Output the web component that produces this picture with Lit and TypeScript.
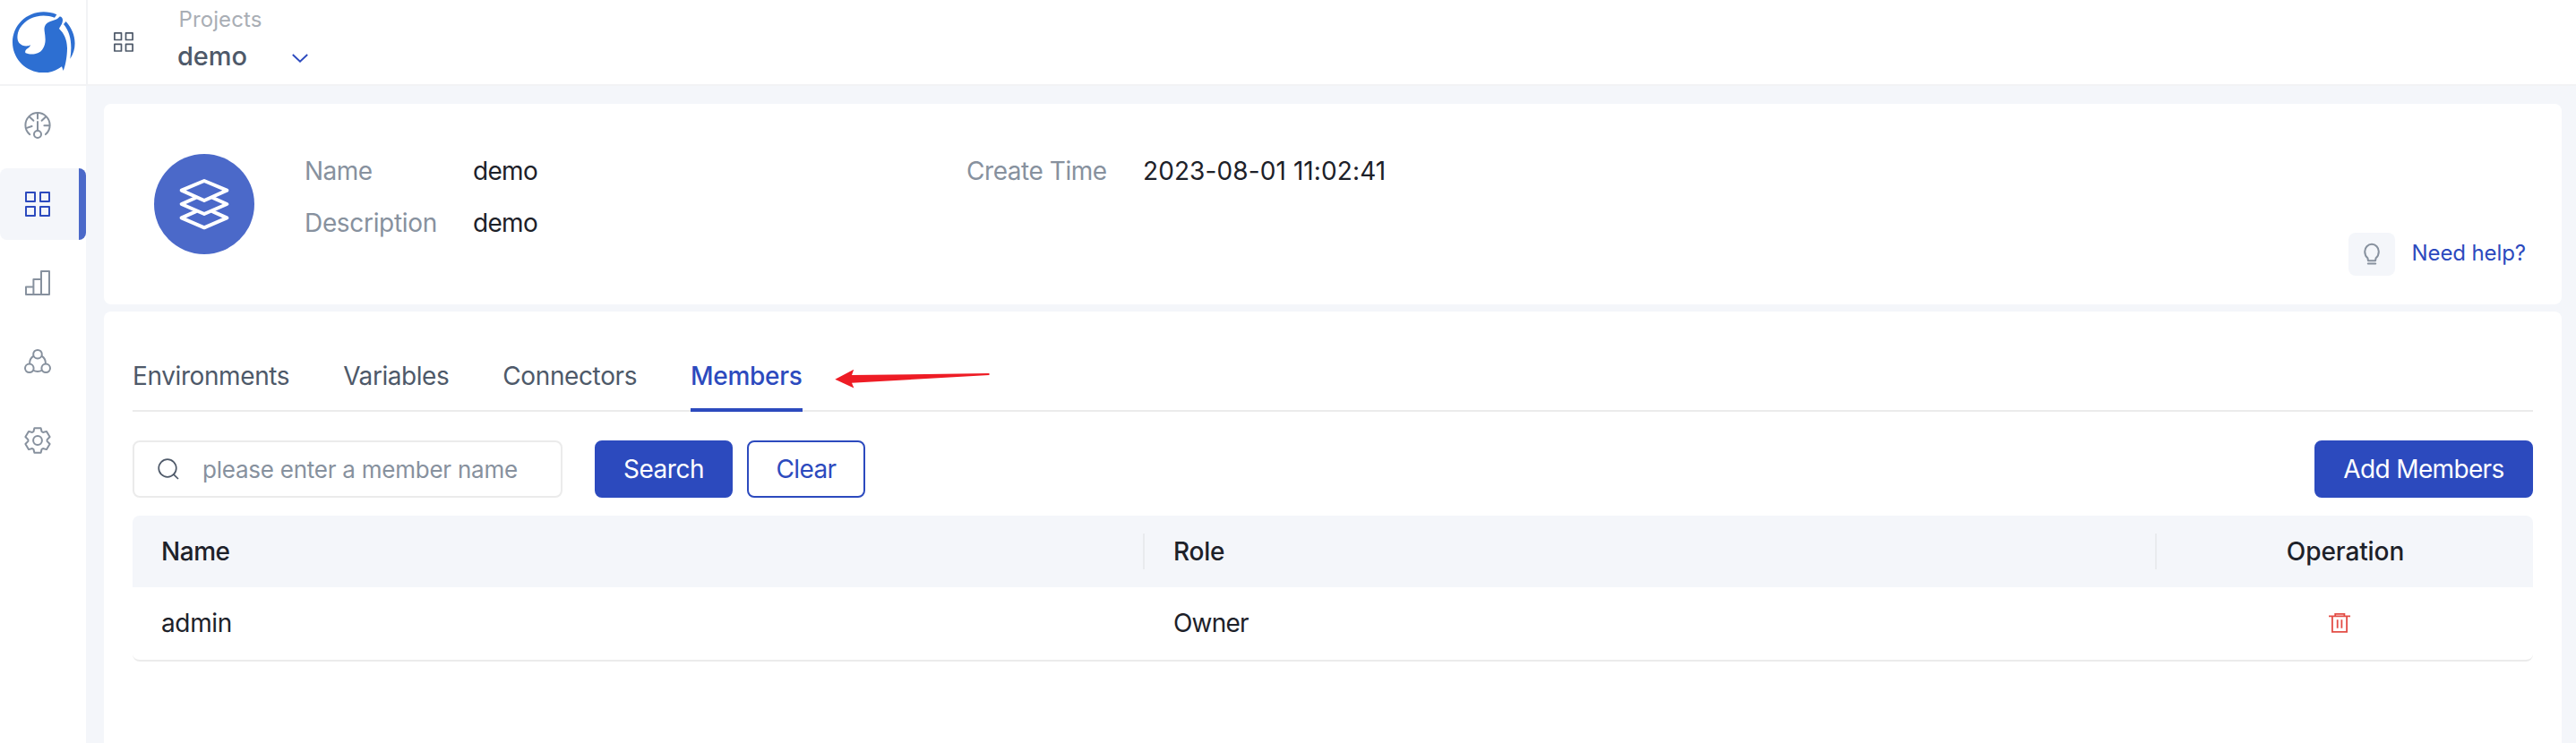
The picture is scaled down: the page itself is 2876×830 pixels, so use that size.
import { LitElement, html, css } from "lit";
import { customElement, property } from "lit/decorators.js";
import { classMap } from "lit/directives/class-map.js";

const gridIcon = html`<svg class="i28" viewBox="0 0 28 28" fill="none" stroke="currentColor" stroke-width="2" stroke-linejoin="round">
  <rect x="1" y="1" width="10" height="10" /><rect x="17" y="1" width="10" height="10" />
  <rect x="1" y="17" width="10" height="10" /><rect x="17" y="17" width="10" height="10" />
</svg>`;

const gaugeIcon = html`<svg class="i32" viewBox="0 0 32 32" fill="none" stroke="currentColor" stroke-width="2" stroke-linecap="round">
  <path d="M7.3 26.2A13.6 13.6 0 0 1 2.4 15.7 13.6 13.6 0 0 1 16 2.1 13.6 13.6 0 0 1 29.6 15.7 13.6 13.6 0 0 1 24.9 26.1" />
  <path d="M16 2.4V8.6M6.6 6.2L11.4 10.8M25.4 6.2L20.6 10.8M4 18.9L9.6 17M29.2 16.2H23.4" />
  <path d="M16 12V21.6" />
  <circle cx="16" cy="26" r="4" />
</svg>`;

const barsIcon = html`<svg class="i28" viewBox="0 0 28 28" fill="none" stroke="currentColor" stroke-width="2" stroke-linejoin="round">
  <path d="M1 18.4H9.4V27H1ZM9.4 10H18V27H9.4ZM18 1H27V27H18Z" />
</svg>`;

const clusterIcon = html`<svg class="i32" viewBox="0 0 32 32" fill="none" stroke="currentColor" stroke-width="2">
  <circle cx="16" cy="7.7" r="4.8" /><circle cx="6.8" cy="23.3" r="4.8" /><circle cx="25.2" cy="23.3" r="4.8" />
  <path d="M11.6 9.6C8.4 11.6 6.9 14.6 7.1 18.4M20.4 9.6C23.6 11.6 25.1 14.6 24.9 18.4M10.9 25.6C14 27.2 18 27.2 21.1 25.6" />
</svg>`;

const gearIcon = html`<svg class="i32" viewBox="0 0 32 32" fill="none" stroke="currentColor" stroke-width="2" stroke-linejoin="round">
  <path d="M12.4 2.2H19.6L20.6 6.2L22 7L26 5.9L29.6 12L26.6 15.1V16.9L29.6 20L26 26.1L22 25L20.6 25.8L19.6 29.8H12.4L11.4 25.8L10 25L6 26.1L2.4 20L5.4 16.9V15.1L2.4 12L6 5.9L10 7L11.4 6.2Z" />
  <circle cx="16" cy="16" r="4.9" />
</svg>`;

const logo = html`<svg class="logo" viewBox="42 38 210 205" fill="#2d6fd2">
  <path d="M190 48C176 41 160 39 146 39C88 39 42 85 42 141C42 197 88 243 146 243C170 243 190 235 207 222L212 236C218 222 225 190 225 160C224 130 215 112 198 95C203 85 210 78 210 65C209 58 204 53 199 55C192 65 180 66 168 71C152 77 147 88 149 103C152 125 156 145 142 165C130 182 104 184 86 177C82 172 86 165 93 161C99 157 102 152 102 150C92 156 75 155 64 143C55 132 57 110 67 93C90 55 140 42 183 58Z" />
  <path d="M221 71C252 105 262 155 235 196C242 150 238 110 213 80Z" />
</svg>`;

@customElement("side-nav")
export class SideNav extends LitElement {
  @property({ type: Number }) active = 1;
  static styles = css`
    :host { display: flex; flex-direction: column; gap: 8px; box-sizing: border-box; width: 96px; padding-top: 4px; background: #fff; color: #87919e; }
    .item { display: flex; height: 80px; box-sizing: border-box; align-items: center; justify-content: center; padding-right: 12px; border-radius: 8px; }
    .item.active { color: #2c4abe; background: linear-gradient(#4b69c9, #4b69c9) right / 8px 100% no-repeat #f4f6fa; }
    svg { display: block; }
    .i28 { width: 28px; height: 28px; }
    .i32 { width: 32px; height: 32px; }
  `;
  render() {
    return [gaugeIcon, gridIcon, barsIcon, clusterIcon, gearIcon].map(
      (icon, i) => html`<div class=${classMap({ item: true, active: i === this.active })}>${icon}</div>`
    );
  }
}

@customElement("top-bar")
export class TopBar extends LitElement {
  static styles = css`
    :host { display: flex; box-sizing: border-box; height: 96px; background: #fff; border-bottom: 2px solid #f2f3f5; }
    svg { display: block; }
    .brand { width: 82px; padding: 12.6px 0 0 14px; border-right: 2px solid #f2f3f5; }
    .logo { width: 70px; height: 68.4px; }
    .switch { color: #4e5969; padding: 36px 0 0 29px; }
    .switch svg { width: 22px; height: 22px; }
    .project { padding: 4px 0 0 49px; }
    .label { height: 36px; line-height: 36px; font-size: 24px; letter-spacing: 0.1px; color: #a9aeb5; padding-left: 1.5px; }
    .current { display: flex; align-items: center; height: 44px; line-height: 44px; font-size: 29px; font-weight: 500; letter-spacing: -0.1px; color: #4e5969; margin-top: 0.5px; }
    .current svg { width: 18px; height: 10px; margin: 4px 0 0 50px; }
  `;
  render() {
    return html`
      <div class="brand">${logo}</div>
      <div class="switch">
        <svg viewBox="0 0 22 22" fill="none" stroke="currentColor" stroke-width="1.7" stroke-linejoin="round">
          <rect x="0.9" y="0.9" width="7.6" height="7.6" /><rect x="13.5" y="0.9" width="7.6" height="7.6" />
          <rect x="0.9" y="13.4" width="7.6" height="7.6" /><rect x="13.5" y="13.4" width="7.6" height="7.6" />
        </svg>
      </div>
      <div class="project">
        <div class="label">Projects</div>
        <div class="current">demo
          <svg viewBox="0 0 18 10" fill="none" stroke="#2c4abe" stroke-width="1.9"><path d="M0.8 1L9 8.6L17.2 1" /></svg>
        </div>
      </div>`;
  }
}

@customElement("project-summary")
export class ProjectSummary extends LitElement {
  static styles = css`
    :host { display: flex; box-sizing: border-box; height: 224px; padding: 46px 40px 32px 56px; background: #fff; border-radius: 8px; }
    svg { display: block; }
    .avatar { display: flex; align-items: center; justify-content: center; width: 112px; height: 112px; margin-top: 10px; border-radius: 50%; background: #4b69c9; }
    .avatar svg { width: 56px; height: 58px; }
    .facts { display: grid; grid-template-columns: 188px 551px 190px auto; grid-auto-rows: 58px; line-height: 58px; margin-left: 56px; font-size: 28px; flex: 1; justify-content: start; color: #1d2129; }
    .key { color: #87919e; }
    .name { letter-spacing: -0.55px; }
    .desc { letter-spacing: -0.33px; }
    .val { letter-spacing: -0.7px; }
    .created { letter-spacing: -0.45px; }
    .date { letter-spacing: 0.1px; padding-left: 7px; }
    .help { display: flex; align-items: center; align-self: flex-end; gap: 19px; height: 48px; line-height: 46px; font-size: 24px; letter-spacing: -0.1px; color: #2c4abe; }
    .help span { padding-bottom: 2px; }
    .tip { display: flex; align-items: center; justify-content: center; width: 52px; height: 48px; border-radius: 8px; background: #f4f6fa; color: #87919e; }
    .tip svg { width: 20px; height: 26px; }
  `;
  render() {
    return html`
      <div class="avatar">
        <svg viewBox="600 597 168 174" fill="none" stroke="#fff" stroke-width="12" stroke-linejoin="round" stroke-linecap="round">
          <path d="M684 606L760 638L684 672L608 638Z" />
          <path d="M655 663L608 684L684 717L760 684L713 663" />
          <path d="M655 709L608 730L684 763L760 730L713 709" />
        </svg>
      </div>
      <div class="facts">
        <span class="key name">Name</span><span class="val">demo</span>
        <span class="key created">Create Time</span><span class="date">2023-08-01 11:02:41</span>
        <span class="key desc">Description</span><span class="val">demo</span>
      </div>
      <div class="help">
        <div class="tip">
          <svg viewBox="0 0 20 26" fill="none" stroke="currentColor" stroke-width="2">
            <path d="M6 20.2L5.4 17.2C3.2 15.4 2.2 13 2.2 10A7.8 8.2 0 0 1 17.8 10C17.8 13 16.8 15.4 14.6 17.2L14 20.2Z" stroke-linejoin="round" />
            <path d="M5.8 23.6H14.2" stroke-linecap="round" />
          </svg>
        </div>
        <span>Need help?</span>
      </div>`;
  }
}

@customElement("member-panel")
export class MemberPanel extends LitElement {
  static styles = css`
    :host { display: block; box-sizing: border-box; padding: 40px 32px 0; background: #fff; border-radius: 8px 8px 0 0; font-size: 28px; color: #1d2129; }
    svg { display: block; }
    .tabs { display: flex; gap: 60px; height: 72px; line-height: 64px; position: relative; color: #4e5969; box-shadow: inset 0 -2px #ebebeb; }
    .env { letter-spacing: -0.4px; }
    .vars { letter-spacing: -0.45px; }
    .conn { letter-spacing: -0.38px; }
    .mem { letter-spacing: -0.3px; font-weight: 500; color: #2c4abe; box-shadow: inset 0 -4px #2c4abe; }
    .arrow { position: absolute; left: 782px; top: 22px; width: 178px; height: 28px; }
    .tools { display: flex; height: 64px; margin-top: 32px; }
    .field { display: flex; align-items: center; box-sizing: border-box; width: 480px; padding-left: 26px; border: 2px solid #ebebeb; border-radius: 8px; font-size: 26px; letter-spacing: -0.24px; color: #87919e; }
    .field svg { width: 24px; height: 24px; margin-right: 26px; }
    .field span { padding-top: 1px; }
    .btn { box-sizing: border-box; height: 64px; line-height: 60px; border: 2px solid #2c4abe; border-radius: 8px; text-align: center; background: #2c4abe; color: #fff; }
    .search { width: 154px; margin-left: 36px; letter-spacing: -0.5px; }
    .clear { width: 132px; margin-left: 16px; background: #fff; color: #2c4abe; letter-spacing: -0.6px; }
    .add { width: 244px; margin-left: auto; letter-spacing: -0.65px; }
    .head, .row { display: grid; grid-template-columns: 1130px 1130px 1fr; line-height: 80px; }
    .head { height: 80px; margin-top: 20px; background: #f4f6fa; border-radius: 8px 8px 0 0; font-weight: 500; align-items: center; }
    .row { height: 83px; box-sizing: border-box; border-bottom: 2px solid #ebebeb; border-radius: 0 0 8px 8px; }
    .cell { padding-left: 32px; }
    .head .sep { box-shadow: inset 2px 0 #e9ebee; height: 40px; line-height: 40px; margin-left: -2px; padding-left: 34px; }
    .head .op { padding-left: 3px; text-align: center; }
    .h-name { letter-spacing: -0.45px; }
    .h-role { letter-spacing: -0.24px; }
    .h-op { letter-spacing: -0.1px; }
    .admin { letter-spacing: -0.37px; }
    .owner { letter-spacing: -0.8px; }
    .act { display: flex; justify-content: center; padding: 28px 12px 0 0; }
    .act svg { width: 24px; height: 24px; }
  `;
  render() {
    return html`
      <div class="tabs">
        <span class="env">Environments</span><span class="vars">Variables</span>
        <span class="conn">Connectors</span><span class="mem">Members</span>
        <svg class="arrow" viewBox="0 0 178 28" fill="#ee1c25">
          <path d="M2.3 13.7L23.2 2.7L21 9L174.5 7L174.5 9L21 17.7L23.4 23.4Z" />
        </svg>
      </div>
      <div class="tools">
        <div class="field">
          <svg viewBox="0 0 24 24" fill="none" stroke="#4e5969" stroke-width="1.7">
            <circle cx="11" cy="11" r="9.8" /><path d="M17.2 17.4L23 23" />
          </svg>
          <span>please enter a member name</span>
        </div>
        <div class="btn search">Search</div>
        <div class="btn clear">Clear</div>
        <div class="btn add">Add Members</div>
      </div>
      <div class="head">
        <div class="cell h-name">Name</div>
        <div class="cell sep h-role">Role</div>
        <div class="cell sep op h-op">Operation</div>
      </div>
      <div class="row">
        <div class="cell admin">admin</div>
        <div class="cell owner">Owner</div>
        <div class="act">
          <svg viewBox="0 0 24 24" fill="none" stroke="#e34d46" stroke-width="1.8">
            <path d="M0 4.3H24M7.2 4V1.8H17.4V4M3.9 4.5V21.8H20.1V4.5M9.7 8.2V17.8M14.4 8.2V17.8" />
          </svg>
        </div>
      </div>`;
  }
}

@customElement("app-root")
export class AppRoot extends LitElement {
  static styles = css`
    :host { display: flex; flex-direction: column; height: 830px; overflow: hidden; background: #f4f6fa; font-family: Inter, "Liberation Sans", sans-serif; }
    .body { display: flex; flex: 1; }
    .main { display: flex; flex-direction: column; flex: 1; gap: 8px; padding: 20px 16px 0 20px; }
    .main member-panel { flex: 1; }
  `;
  render() {
    return html`
      <top-bar></top-bar>
      <div class="body">
        <side-nav></side-nav>
        <div class="main">
          <project-summary></project-summary>
          <member-panel></member-panel>
        </div>
      </div>`;
  }
}
